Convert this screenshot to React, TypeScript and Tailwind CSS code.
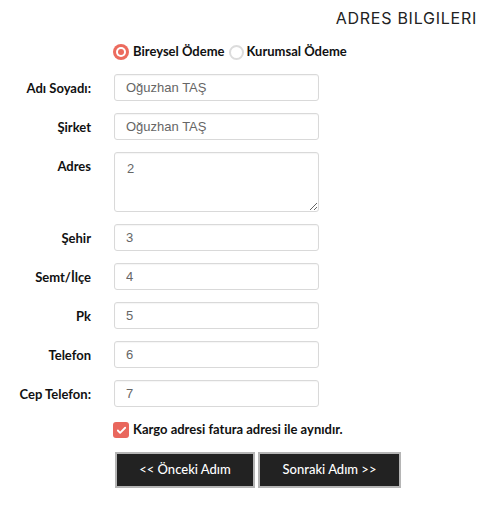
import { Check } from "lucide-react";

const fields = [
  { label: "Adı Soyadı:", value: "Oğuzhan TAŞ" },
  { label: "Şirket", value: "Oğuzhan TAŞ" },
  { label: "Adres", value: "2", area: true },
  { label: "Şehir", value: "3" },
  { label: "Semt/İlçe", value: "4" },
  { label: "Pk", value: "5" },
  { label: "Telefon", value: "6" },
  { label: "Cep Telefon:", value: "7" },
];

const App = () => {
  return (
    <div className="w-[500px] h-[506px] bg-white text-[#111] font-['Lato',sans-serif]">
      {/* Title */}
      <div className="pt-[8px] pr-[23px] text-right">
        <h1 className="font-['Inter',sans-serif] font-normal text-[16px] leading-[20px] text-[#222] tracking-[0.75px]">
          ADRES BILGILERI
        </h1>
      </div>

      {/* Payment type */}
      <div className="mt-[14px] pl-[113px] flex items-center h-[20px] text-[13px] font-bold">
        <span className="w-[16px] h-[16px] rounded-full bg-[#ec6b5e] flex items-center justify-center">
          <span className="w-[10px] h-[10px] rounded-full bg-white flex items-center justify-center">
            <span className="w-[6px] h-[6px] rounded-full bg-[#ec6b5e]" />
          </span>
        </span>
        <span className="ml-[4px]">Bireysel Ödeme</span>
        <span className="ml-[4px] w-[15px] h-[15px] rounded-full border-2 border-[#dcdcdc] bg-white" />
        <span className="ml-[3px]">Kurumsal Ödeme</span>
      </div>

      {/* Form rows */}
      <div className="mt-[12px] flex flex-col gap-[12px]">
        {fields.map((f) => (
          <div key={f.label} className="flex items-start">
            <label className="w-[91px] text-right text-[13px] font-bold leading-[20px] pt-[4px]">
              {f.label}
            </label>
            {f.area ? (
              <textarea
                defaultValue={f.value}
                className="ml-[23px] w-[205px] h-[60px] border border-[#d9d9d9] rounded-[3px] px-[12px] pt-[6px] text-[13px] text-[#666] font-['Liberation_Sans',sans-serif] outline-none shadow-[inset_0_1px_1px_rgba(0,0,0,0.04)]"
              />
            ) : (
              <input
                defaultValue={f.value}
                className="ml-[23px] w-[205px] h-[27px] border border-[#d9d9d9] rounded-[3px] px-[11px] text-[13px] text-[#666] font-['Liberation_Sans',sans-serif] outline-none shadow-[inset_0_1px_1px_rgba(0,0,0,0.04)]"
              />
            )}
          </div>
        ))}
      </div>

      {/* Same address */}
      <div className="mt-[15px] pl-[113px] flex items-center h-[16px]">
        <span className="w-[16px] h-[16px] rounded-[3px] bg-[#e9675d] flex items-center justify-center">
          <Check className="w-[11px] h-[11px] text-white" strokeWidth={4} />
        </span>
        <span className="ml-[4px] text-[13px] font-bold">Kargo adresi fatura adresi ile aynıdır.</span>
      </div>

      {/* Buttons */}
      <div className="mt-[14px] pl-[115px] flex gap-[3px]">
        <button className="w-[140px] h-[36px] bg-[#222] border-2 border-[#b5b5b5] text-white text-[13px] font-medium">
          &lt;&lt; Önceki Adım
        </button>
        <button className="w-[143px] h-[36px] bg-[#222] border-2 border-[#b5b5b5] text-white text-[13px] font-medium">
          Sonraki Adım &gt;&gt;
        </button>
      </div>
    </div>
  );
};

export default App;
